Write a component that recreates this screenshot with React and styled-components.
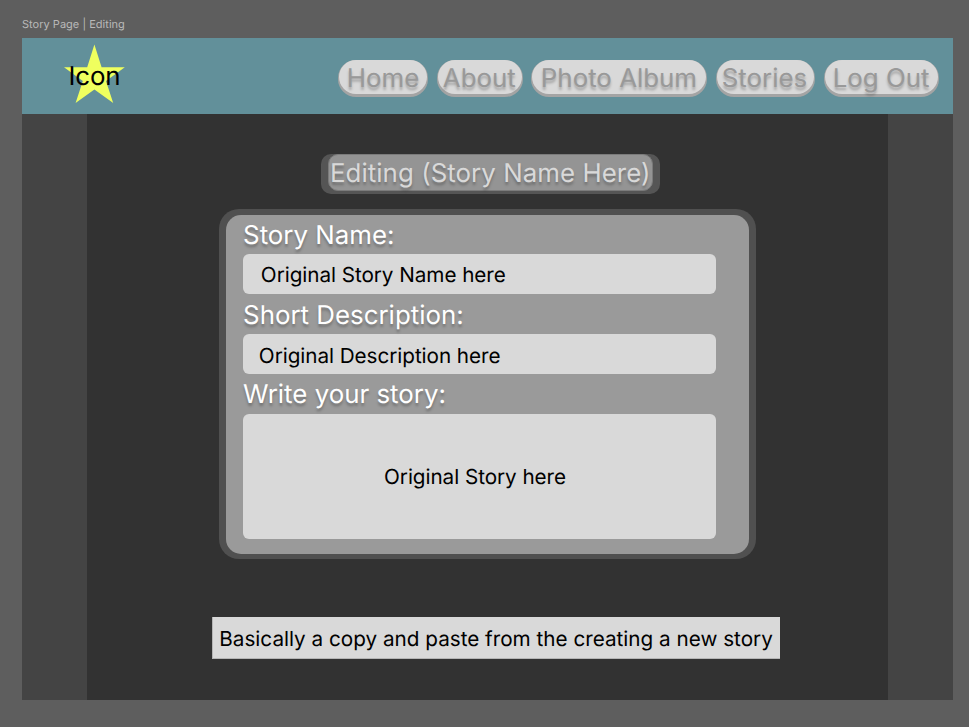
import React from "react";
import styled, { createGlobalStyle } from "styled-components";

const GlobalStyle = createGlobalStyle`
  * { box-sizing: border-box; }
  body {
    margin: 0;
    background: #5e5e5e;
    font-family: Inter, "Liberation Sans", sans-serif;
    color: #000;
    text-rendering: geometricPrecision;
    -webkit-font-smoothing: antialiased;
  }
`;

const Canvas = styled.div`
  width: 969px;
  height: 727px;
  padding: 18px 16px 27px 22px;
  background: #5e5e5e;
  overflow: hidden;
`;

const FrameLabel = styled.div`
  height: 20px;
  font-size: 11px;
  line-height: 13px;
  letter-spacing: 0.02px;
  color: #b9b9b9;
  white-space: nowrap;
`;

const Frame = styled.div`
  width: 931px;
  height: 662px;
  display: flex;
  flex-direction: column;
  background: #444;
`;

const Header = styled.header`
  height: 76px;
  flex: none;
  display: flex;
  justify-content: space-between;
  align-items: flex-start;
  padding: 0 13.6px 0 42px;
  background: #62909a;
`;

const Logo = styled.div`
  display: grid;
  width: 61px;
  height: 66px;
  > * { grid-area: 1 / 1; }
`;

const LogoText = styled.span`
  padding: 23px 0 0 4.4px;
  font-size: 25.86px;
  line-height: 32px;
  letter-spacing: -0.1px;
  white-space: nowrap;
`;

const Nav = styled.nav`
  display: flex;
  padding-top: 22px;
`;

const NavButton = styled.a`
  width: ${(p) => p.$width}px;
  height: 37px;
  margin-left: ${(p) => p.$gap}px;
  padding: 0 1px 3px;
  border-radius: 18px;
  background: #a4a4a4;
`;

const NavFace = styled.span`
  display: block;
  height: 34px;
  padding-left: ${(p) => p.$inset}px;
  border-radius: 17px;
  background: #d9d9d9;
  color: #999;
  font-size: 25.86px;
  line-height: 37px;
  text-shadow: 0 2.6px 2.6px rgba(0, 0, 0, 0.25);
  white-space: nowrap;
`;

const Main = styled.main`
  flex: 1;
  width: 801.6px;
  margin-left: 64.6px;
  display: flex;
  flex-direction: column;
  align-items: flex-start;
  background: #323232;
`;

const TitlePlate = styled.div`
  width: 339px;
  height: 40px;
  margin: 40px 0 0 234.4px;
  padding: 0 7px 3px;
  border-radius: 10px;
  background: #555;
`;

const Title = styled.h1`
  height: 37px;
  margin: 0;
  padding-left: 1px;
  border: 1px solid #7b7b7b;
  border-radius: 10px;
  background: #949494;
  color: #d9d9d9;
  font-size: 25.86px;
  font-weight: 400;
  line-height: 37px;
  letter-spacing: 0.05px;
  text-shadow: 0 2.6px 2.6px rgba(0, 0, 0, 0.25);
  white-space: nowrap;
`;

const Panel = styled.form`
  width: 536.4px;
  height: 350px;
  margin: 15px 0 0 132.7px;
  padding: 5.5px 6.4px 5px;
  border-radius: 20px;
  background: #505050;
`;

const PanelFace = styled.div`
  height: 339.5px;
  padding: 0 33px 0 17.4px;
  border-radius: 15px;
  background: #9a9a9a;
`;

const FieldLabel = styled.label`
  display: block;
  height: 39.9px;
  padding-top: 5.6px;
  color: #fff;
  font-size: 25.86px;
  line-height: 32px;
  text-shadow: 0 2.6px 2.6px rgba(0, 0, 0, 0.25);
  white-space: nowrap;
`;

const Field = styled.div`
  width: 473.2px;
  height: ${(p) => p.$height}px;
  padding: ${(p) => p.$top}px 0 0 ${(p) => p.$left}px;
  border-radius: 6px;
  background: #d9d9d9;
  font-size: 20.69px;
  line-height: 26px;
  letter-spacing: -0.05px;
  white-space: nowrap;
`;

const Note = styled.p`
  width: 568px;
  height: 42px;
  margin: 58px 0 0 125.7px;
  padding: 9px 0 0 6px;
  border: 1px solid #b5b5b5;
  border-width: 0 0 1px 1px;
  background: #d9d9d9;
  font-size: 20.69px;
  line-height: 26px;
  white-space: nowrap;
`;

const LINKS = [
  { label: "Home", width: 90.6, gap: 0, inset: 8 },
  { label: "About", width: 86, gap: 8.4, inset: 5 },
  { label: "Photo Album", width: 176, gap: 8, inset: 9 },
  { label: "Stories", width: 99, gap: 8.9, inset: 5 },
  { label: "Log Out", width: 115.7, gap: 9, inset: 8 },
];

const FIELDS = [
  { label: "Story Name:", value: "Original Story Name here", height: 39.8, top: 7.3, left: 17.8 },
  { label: "Short Description:", value: "Original Description here", height: 39.8, top: 8.6, left: 15.8 },
  { label: "Write your story:", value: "Original Story here", height: 125.5, top: 50, left: 141 },
];

export default function App() {
  return (
    <Canvas>
      <GlobalStyle />
      <FrameLabel>Story Page | Editing</FrameLabel>
      <Frame>
        <Header>
          <Logo>
            <svg width="61" height="66" viewBox="0 0 61 66">
              <path
                d="M30.4 6.6 L37.6 29.2 H60.8 L42 43 L49.2 65 L30.4 51.4 L11.6 65 L18.8 43 L0 29.2 H23.2 Z"
                fill="#efff5e"
              />
            </svg>
            <LogoText>Icon</LogoText>
          </Logo>
          <Nav>
            {LINKS.map((l) => (
              <NavButton key={l.label} $width={l.width} $gap={l.gap}>
                <NavFace $inset={l.inset}>{l.label}</NavFace>
              </NavButton>
            ))}
          </Nav>
        </Header>
        <Main>
          <TitlePlate>
            <Title>Editing (Story Name Here)</Title>
          </TitlePlate>
          <Panel>
            <PanelFace>
              {FIELDS.map((f) => (
                <React.Fragment key={f.label}>
                  <FieldLabel>{f.label}</FieldLabel>
                  <Field $height={f.height} $top={f.top} $left={f.left}>{f.value}</Field>
                </React.Fragment>
              ))}
            </PanelFace>
          </Panel>
          <Note>Basically a copy and paste from the creating a new story</Note>
        </Main>
      </Frame>
    </Canvas>
  );
}
